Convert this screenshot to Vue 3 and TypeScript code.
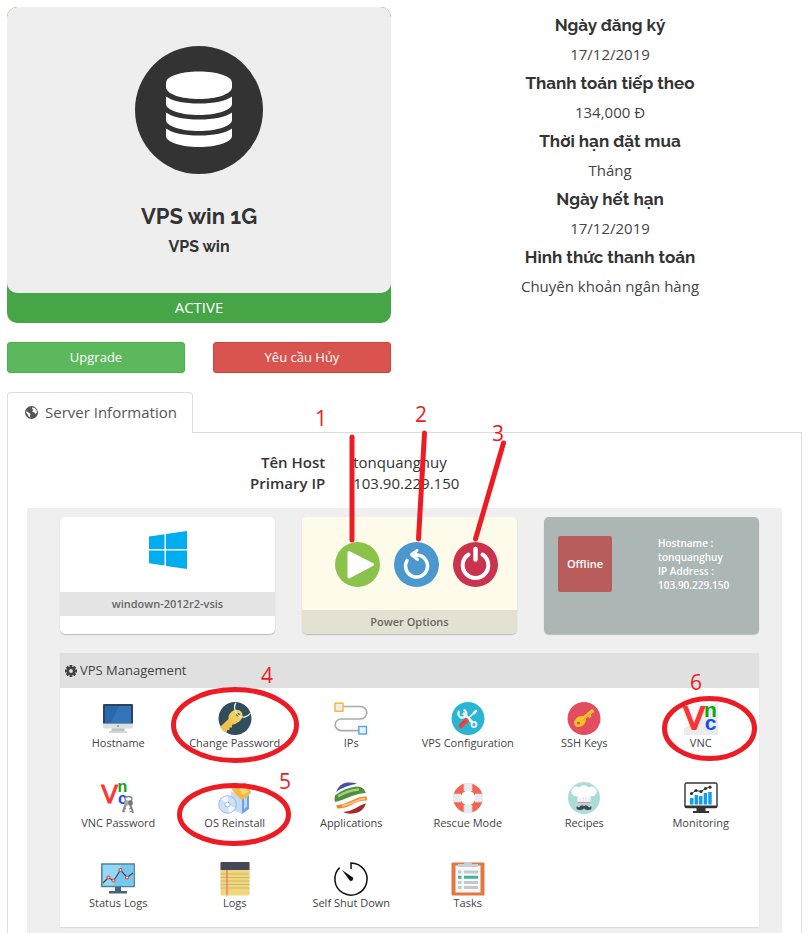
<script setup lang="ts">
interface Detail {
  label: string
  value: string
}
interface Tool {
  id: string
  label: string
}
interface Callout {
  label: string
  x: number
  y: number
}

const details: Detail[] = [
  { label: 'Ngày đăng ký', value: '17/12/2019' },
  { label: 'Thanh toán tiếp theo', value: '134,000 Đ' },
  { label: 'Thời hạn đặt mua', value: 'Tháng' },
  { label: 'Ngày hết hạn', value: '17/12/2019' },
  { label: 'Hình thức thanh toán', value: 'Chuyên khoản ngân hàng' },
]

const tools: Tool[] = [
  { id: 'hostname', label: 'Hostname' },
  { id: 'password', label: 'Change Password' },
  { id: 'ips', label: 'IPs' },
  { id: 'config', label: 'VPS Configuration' },
  { id: 'ssh', label: 'SSH Keys' },
  { id: 'vnc', label: 'VNC' },
  { id: 'vncpass', label: 'VNC Password' },
  { id: 'reinstall', label: 'OS Reinstall' },
  { id: 'apps', label: 'Applications' },
  { id: 'rescue', label: 'Rescue Mode' },
  { id: 'recipes', label: 'Recipes' },
  { id: 'monitoring', label: 'Monitoring' },
  { id: 'status', label: 'Status Logs' },
  { id: 'logs', label: 'Logs' },
  { id: 'shutdown', label: 'Self Shut Down' },
  { id: 'tasks', label: 'Tasks' },
]

const callouts: Callout[] = [
  { label: '1', x: 321, y: 426 },
  { label: '2', x: 421, y: 422 },
  { label: '3', x: 498, y: 441 },
  { label: '4', x: 267, y: 683 },
  { label: '5', x: 285, y: 789 },
  { label: '6', x: 696, y: 690 },
]
</script>

<template>
  <main class="page">
    <section class="overview">
      <div>
        <div class="product">
          <div class="product-body">
            <svg class="product-icon" viewBox="0 0 128 128" aria-hidden="true">
              <circle cx="64" cy="64" r="64" fill="#333" />
              <g fill="#fff">
                <path d="M31 37C31 30 46 25.500 64 25.500S97 30 97 37V41C97 48 82 53 64 53S31 48 31 41Z" />
                <path d="M31 50.500C37 55 49 57.500 64 57.500S91 55 97 50.500V58C97 64 82 69 64 69S31 64 31 58Z" />
                <path d="M31 66.500C37 71 49 73.500 64 73.500S91 71 97 66.500V74C97 80 82 85 64 85S31 80 31 74Z" />
                <path d="M31 82.500C37 87 49 89.500 64 89.500S91 87 97 82.500V90C97 96 82 101 64 101S31 96 31 90Z" />
              </g>
            </svg>
            <h1>VPS win 1G</h1>
            <h2>VPS win</h2>
          </div>
          <div class="product-status">ACTIVE</div>
        </div>
        <div class="actions">
          <button type="button" class="btn btn-upgrade">Upgrade</button>
          <button type="button" class="btn btn-cancel">Yêu cầu Hủy</button>
        </div>
      </div>
      <dl class="billing">
        <template v-for="d in details" :key="d.label">
          <dt>{{ d.label }}</dt>
          <dd>{{ d.value }}</dd>
        </template>
      </dl>
    </section>

    <nav class="tabs">
      <a class="tab" href="#server">
        <svg width="13" height="13" viewBox="0 0 13 13" aria-hidden="true">
          <circle cx="6.500" cy="6.500" r="6.500" fill="#555" />
          <path d="M7.500 1.200L9.500 2L11.500 4L12 6.500L10.500 8L9.500 6.500L7.500 6L7.500 4.800L8.800 3.800L7 3Z" fill="#fff" />
          <path d="M1.500 5L3.500 6.500L5.500 8L5 9.800L5.300 11.500L3.500 10.500L2.700 8.500L1.200 6.800Z" fill="#fff" />
        </svg>
        Server Information
      </a>
    </nav>

    <section id="server" class="tab-panel">
      <dl class="host">
        <dt>Tên Host</dt>
        <dd>tonquanghuy</dd>
        <dt>Primary IP</dt>
        <dd>103.90.229.150</dd>
      </dl>

      <div class="console">
        <div class="cards">
          <article class="card">
            <div class="os-logo">
              <svg width="38" height="38" viewBox="0 0 38 38" aria-hidden="true">
                <path d="M0 5.500L15.500 3.300V18H0ZM17 3.100L38 0V18H17ZM0 19.500H15.500V34.500L0 32.300ZM17 19.500H38V38L17 34.900Z" fill="#00adef" />
              </svg>
            </div>
            <p class="card-label">windown-2012r2-vsis</p>
          </article>

          <article class="card card-power">
            <div class="power-buttons">
              <button type="button" class="power" aria-label="Start">
                <svg viewBox="0 0 45 45" aria-hidden="true">
                  <circle cx="22.500" cy="22.500" r="22.500" fill="#8bc34a" />
                  <path d="M14 10.500L37.500 22.500L14 35Z" fill="#fff" stroke="#fff" stroke-width="3" stroke-linejoin="round" />
                </svg>
              </button>
              <button type="button" class="power" aria-label="Restart">
                <svg viewBox="0 0 45 45" aria-hidden="true">
                  <circle cx="22.500" cy="22.500" r="22.500" fill="#4a98ce" />
                  <path d="M13 18.500A11 11 0 1 0 23 13" fill="none" stroke="#fff" stroke-width="3.500" stroke-linecap="round" />
                  <path d="M23 8.500L17.500 12.500L23.500 17.500" fill="#fff" stroke="#fff" stroke-width="3" stroke-linejoin="round" stroke-linecap="round" />
                </svg>
              </button>
              <button type="button" class="power" aria-label="Shut down">
                <svg viewBox="0 0 45 45" aria-hidden="true">
                  <circle cx="22.500" cy="22.500" r="22.500" fill="#cb324d" />
                  <path d="M15.500 12.500A12.800 12.800 0 1 0 29.500 12.500" fill="none" stroke="#fff" stroke-width="4" stroke-linecap="round" />
                  <path d="M22.500 7V17.500" stroke="#fff" stroke-width="4.500" stroke-linecap="round" />
                </svg>
              </button>
            </div>
            <p class="card-label">Power Options</p>
          </article>

          <article class="card card-state">
            <strong class="state">Offline</strong>
            <p class="state-info">
              Hostname :<br />tonquanghuy<br />IP Address :<br />103.90.229.150
            </p>
          </article>
        </div>

        <section class="manage">
          <h3>
            <svg width="12" height="12" viewBox="0 0 12 12" aria-hidden="true">
              <g stroke="#444" stroke-width="2.800">
                <path d="M6 0V12M0 6H12M1.700 1.700L10.300 10.300M10.300 1.700L1.700 10.300" />
              </g>
              <circle cx="6" cy="6" r="4.300" fill="#444" />
              <circle cx="6" cy="6" r="1.900" fill="#e0e0e0" />
            </svg>
            VPS Management
          </h3>
          <ul class="tools">
            <li v-for="t in tools" :key="t.id">
              <a href="#server" class="tool">
                <svg class="tool-icon" viewBox="0 0 34 34" aria-hidden="true">
                  <g v-if="t.id === 'hostname'">
                    <path d="M11 26H23L24 30H10Z" fill="#bfc3c7" />
                    <path d="M8 29H26V31H8Z" fill="#d3d6d8" />
                    <rect x="2" y="2" width="30" height="21" rx="1" fill="#254561" />
                    <rect x="4" y="4" width="26" height="17" fill="#2a67ad" />
                    <path d="M18 4H30V21H10Z" fill="#3475ba" />
                    <path d="M2 21.500H32V25Q32 26.500 30.500 26.500H3.500Q2 26.500 2 25Z" fill="#dde0e2" />
                    <circle cx="17" cy="24" r=".8" fill="#555" />
                  </g>
                  <g v-else-if="t.id === 'password'">
                    <circle cx="17" cy="16.500" r="16.500" fill="#324d5c" />
                    <path d="M12 15.500L2 25L6 29.500L8.500 30.500L9.500 28L11.500 28V25.500L14 25.500V23L18.500 21.500Z" fill="#efc14f" />
                    <ellipse cx="17.500" cy="14.500" rx="7.500" ry="6.300" fill="#f4cd5b" transform="rotate(-40 17.500 14.500)" />
                    <circle cx="20" cy="12.800" r="1.800" fill="#324d5c" />
                    <path d="M20 13C15.500 9 16 3 18 .8M20 13C24 17 30 15 32.500 11" fill="none" stroke="#e8eef0" stroke-width="1.300" />
                  </g>
                  <g v-else-if="t.id === 'ips'" fill="none">
                    <path d="M9 4.500H26.500A6.200 6.200 0 0 1 26.500 17H7A5.800 5.800 0 0 0 7 28.600H25" stroke="#aaa" stroke-width="1.600" />
                    <rect x="1" y="1.200" width="8" height="8" fill="#eee" stroke="#f6b728" stroke-width="1.400" />
                    <rect x="24.800" y="24.500" width="7.700" height="7.500" fill="#eee" stroke="#3da5df" stroke-width="1.300" />
                  </g>
                  <g v-else-if="t.id === 'config'">
                    <circle cx="17" cy="16.500" r="16.500" fill="#29b6d3" />
                    <path d="M12 11L22 21" stroke="#f1f3f4" stroke-width="3" />
                    <path d="M8.300 9A4 4 0 1 0 12.500 7.800" fill="none" stroke="#f1f3f4" stroke-width="2.300" />
                    <circle cx="23" cy="22.500" r="2.500" fill="none" stroke="#f1f3f4" stroke-width="1.800" />
                    <path d="M15 18.500L23 11" stroke="#fff" stroke-width="1.500" />
                    <path d="M21.500 10.500L25 7.500L26.500 9L23.500 12.500Z" fill="#fff" />
                    <path d="M15.500 18.500L9.700 24" stroke="#e84849" stroke-width="4.500" stroke-linecap="round" />
                    <path d="M13.500 19L9 23.500" stroke="#c92d38" stroke-width="1" />
                  </g>
                  <g v-else-if="t.id === 'ssh'">
                    <circle cx="17" cy="16.500" r="16.500" fill="#e24e60" />
                    <path d="M14 18.500L25.500 8.500" stroke="#f9c425" stroke-width="3" />
                    <path d="M20 13L22.500 16.500L24.500 14.500L23.500 12.500L25.500 11L27.300 10L26 7L23 8.500" fill="#f9c425" />
                    <ellipse cx="13" cy="19.500" rx="6.500" ry="4.900" fill="#f9c425" transform="rotate(-40 13 19.500)" />
                    <circle cx="11.500" cy="21" r="1.600" fill="#e24e60" />
                    <path d="M15.500 18.500L24.500 10.500" stroke="#df9e17" stroke-width=".8" />
                  </g>
                  <g v-else-if="t.id === 'vnc'">
                    <rect width="34" height="33" fill="#ececec" />
                    <path d="M0 0H34L0 27Z" fill="#fafafa" />
                    <text class="vnc-big" x="10" y="27">V</text>
                    <text class="vnc-mid vnc-n" x="26.500" y="15">n</text>
                    <text class="vnc-mid vnc-c" x="26.500" y="28">c</text>
                  </g>
                  <g v-else-if="t.id === 'vncpass'">
                    <text class="vnc-medium" x="8.500" y="20.500">V</text>
                    <text class="vnc-small vnc-n" x="21.500" y="10">n</text>
                    <text class="vnc-small vnc-c" x="21.500" y="21.500">c</text>
                    <g fill="none" stroke="#858585">
                      <ellipse cx="27.500" cy="17" rx="3.500" ry="2.500" stroke-width="1.300" />
                      <path d="M25 21L22 30M29 21L32 31" stroke-width="2" />
                      <path d="M22 26L25 27M21.500 29L24 30M30 26L28 27M31 29L28.500 30" stroke-width="1.300" />
                    </g>
                    <ellipse cx="25.500" cy="21" rx="2.300" ry="2.800" fill="#aaa" />
                    <ellipse cx="29.500" cy="21" rx="2.300" ry="2.800" fill="#777" />
                  </g>
                  <g v-else-if="t.id === 'reinstall'">
                    <path d="M13 9L24 14V32L13 27Z" fill="#c3daf8" />
                    <path d="M24 14L31 9V27L24 32Z" fill="#719fe0" />
                    <path d="M26 15L29 13V25L26 27Z" fill="#b9d7fa" />
                    <path d="M14 7L18 0L23 4L27 0L33 10L28 17L22 12Z" fill="#a9c7f2" />
                    <path d="M13 6L20 4L31 6L33 11L24 18L18 13Z" fill="#f6b940" />
                    <path d="M21 4L29 6L30 10L24 13Z" fill="#ffd774" />
                    <circle cx="9.500" cy="22.500" r="8.800" fill="#cfe0f8" stroke="#8fa9d4" stroke-width=".8" />
                    <path d="M9.500 22.500L3 17A8 8 0 0 1 10 14.500ZM9.500 22.500L17 26A8 8 0 0 1 11 30.500Z" fill="#f2f7ff" />
                    <circle cx="9.500" cy="22.500" r="2.500" fill="#fff" stroke="#8aa9d7" stroke-width=".8" />
                  </g>
                  <g v-else-if="t.id === 'apps'" fill="none">
                    <path d="M2 10Q5 2 13 .6Q19 0 23 1.800Q11 3.500 2 10Z" fill="#3f559c" />
                    <path d="M.8 20Q0 16 1 13.500Q10 6 22 4.500Q28 4.500 30 7.500L32 11Q26 11 18 14Q9 18 .8 20Z" fill="#4f8f3a" />
                    <path d="M4 14.500Q13 8.500 25 7.500" stroke="#a4cd85" stroke-width="2.500" />
                    <path d="M3.500 26.500L2 23.500Q10 22.500 18 18.500Q26 14 32.800 14.500V18.500Q26 18 18 22.500Q11 26.500 3.500 26.500Z" fill="#f08530" />
                    <path d="M8 24Q15 22.500 20 20Q26 17 31 16.500" stroke="#ffc477" stroke-width="1.800" />
                    <path d="M9 30Q16 29.500 22 26Q28 22 32 21.500Q29.500 29 22 31Q14 33 9 30Z" fill="#a32c2a" />
                  </g>
                  <g v-else-if="t.id === 'rescue'" fill="none">
                    <circle cx="17" cy="16" r="11" stroke="#f46452" stroke-width="7.500" />
                    <path d="M13 1H21V9H13ZM13 23H21V31H13ZM2 12H10V20H2ZM24 12H32V20H24Z" fill="#e8ecef" />
                    <path d="M13 1V9M21 1V9M13 23V31M21 23V31M2 12H10M24 12H32M2 20H10M24 20H32" stroke="#cfd5d9" stroke-width=".8" />
                  </g>
                  <g v-else-if="t.id === 'recipes'">
                    <circle cx="17" cy="16" r="16" fill="#abdcd8" />
                    <path d="M10.500 21V14A4.800 4.800 0 1 1 12 5.500Q17 1 22 5.500A4.800 4.800 0 1 1 23.500 14V21Z" fill="#fff" />
                    <path d="M13 16V20M16 15V20M19 15V20M22 16V20" stroke="#ccdcdd" stroke-width="1" />
                    <path d="M10.500 20.500H23.500" stroke="#f28c91" stroke-width="1.200" />
                    <path d="M17 24Q20 22 21.500 25Q23 26 24 24Q26 28 21 28Q18.500 28 17 26.500Q15.500 28 13 28Q8 28 10 24Q11 26 12.500 25Q14 22 17 24Z" fill="#3e4a50" />
                  </g>
                  <g v-else-if="t.id === 'monitoring'">
                    <rect x="1" y="1" width="32" height="24.500" rx="1.500" fill="#fff" stroke="#333" stroke-width="1.400" />
                    <path d="M1 24.500H33" stroke="#333" stroke-width="2" />
                    <path d="M12.500 26H21.500V29H25V31H9V29H12.500Z" fill="#333" />
                    <path d="M6 16H9.500V22.500H6ZM10.600 13H14V22.500H10.600ZM15 14H18.500V22.500H15ZM19.700 11H23V22.500H19.700ZM24.200 10H27.700V22.500H24.200Z" fill="#129df1" />
                    <path d="M7.500 11.500L12 8.500L17 9.500L21.500 6.500L26 5" stroke="#333" stroke-width="1" fill="none" />
                    <g fill="#333">
                      <circle cx="7.500" cy="11.500" r="1.600" />
                      <circle cx="12" cy="8.500" r="1.600" />
                      <circle cx="17" cy="9.500" r="1.600" />
                      <circle cx="21.500" cy="6.500" r="1.600" />
                      <circle cx="26" cy="5.200" r="1.600" />
                    </g>
                  </g>
                  <g v-else-if="t.id === 'status'">
                    <path d="M14 24H20V29H26V31.500H8V29H14Z" fill="#46647a" />
                    <rect x=".8" y="2" width="32.400" height="22.500" fill="#92d9f7" stroke="#557d98" stroke-width="1.500" />
                    <path d="M20 3H32.500V24H12Z" fill="#75c9f0" />
                    <path d="M2 21L7.500 15.500L12.500 19L19.500 8L26 15.500L32 11" fill="none" stroke="#3a4954" stroke-width="1.200" />
                    <g fill="#fff" stroke="#ee3c3c" stroke-width="1.200">
                      <circle cx="7.500" cy="15.500" r="1.500" />
                      <circle cx="12.500" cy="18.500" r="1.500" />
                      <circle cx="19.500" cy="8" r="1.500" />
                      <circle cx="26" cy="15.500" r="1.500" />
                    </g>
                  </g>
                  <g v-else-if="t.id === 'logs'">
                    <rect x="2.500" y="0" width="29" height="33.500" rx="1.500" fill="#f0d77d" />
                    <path d="M2.500 8V1Q2.500 0 3.500 0H30.500Q31.500 0 31.500 1V8Z" fill="#444854" />
                    <path d="M2.500 12H31.500M2.500 15.500H31.500M2.500 19H31.500M2.500 22.500H31.500M2.500 26H31.500" stroke="#cdb96c" stroke-width="1" />
                    <path d="M9 8V33.500" stroke="#f26b62" stroke-width="1.200" />
                  </g>
                  <g v-else-if="t.id === 'shutdown'">
                    <path d="M17 7V.9A16.100 16.100 0 1 1 5.600 5.600" fill="none" stroke="#111" stroke-width="1.500" />
                    <path d="M8 8L18.500 15.200A2 2 0 0 1 15.500 18.300Z" fill="#111" />
                  </g>
                  <g v-else>
                    <rect x=".5" y=".5" width="33" height="33" rx="1" fill="#e2773f" />
                    <rect x="4.500" y="3.500" width="25" height="27" fill="#f7f8f8" />
                    <path d="M7 2H13Q13 0 15 0H19Q21 0 21 2H27V5H7Z" fill="#c9cfd2" />
                    <path d="M7 10H10.500M7 20.500H10.500M7 25.500H10.500M13 10H27M13 20.500H27M13 25.500H27" stroke="#c3c9cb" stroke-width="3" />
                    <path d="M7 15.200H10.500M13 15.200H27" stroke="#3fb39d" stroke-width="3" />
                  </g>
                </svg>
                <span>{{ t.label }}</span>
              </a>
            </li>
          </ul>
        </section>
      </div>
    </section>

    <!-- Numbered callouts drawn over the page -->
    <svg class="callouts" width="807" height="933" viewBox="0 0 807 933" aria-hidden="true">
      <g fill="none" stroke="#ed1c24" stroke-width="5" stroke-linecap="round">
        <path d="M352 437V540M424.500 433L418.500 539M503.500 443L475.500 539" />
        <ellipse cx="235" cy="725" rx="61.500" ry="35.500" />
        <ellipse cx="234" cy="814.500" rx="54.500" ry="29" />
        <ellipse cx="709.500" cy="728.500" rx="45" ry="30" />
      </g>
      <text v-for="c in callouts" :key="c.label" :x="c.x" :y="c.y">{{ c.label }}</text>
    </svg>
  </main>
</template>

<style>
body {
  background: #fff;
}
</style>

<style scoped>
* {
  box-sizing: border-box;
}
h1,
h2,
h3,
p,
dl,
dd,
ul {
  margin: 0;
  padding: 0;
}
.page {
  position: relative;
  padding: 7px 5px 0 7px;
  color: #333;
  font-family: 'Open Sans', sans-serif;
  font-size: 15px;
  line-height: 21px;
}
.overview {
  display: grid;
  grid-template-columns: 1fr 1fr;
  gap: 27px;
}
.product {
  background: #46a546;
  border-radius: 10px;
  overflow: hidden;
  text-align: center;
}
.product-body {
  display: flex;
  flex-direction: column;
  align-items: center;
  padding: 39px 10px 35px;
  background: #eee;
  border-radius: 10px;
}
.product-icon {
  width: 128px;
  height: 128px;
  margin-bottom: 28px;
}
h1,
h2,
.billing dt {
  font-family: Raleway, sans-serif;
  font-weight: 700;
}
h1 {
  font-size: 22px;
  line-height: 28px;
}
h2 {
  padding-top: 6px;
  font-size: 16px;
  line-height: 22px;
}
.product-status {
  padding-bottom: 2px;
  color: #fff;
  line-height: 28px;
}
.actions {
  display: grid;
  grid-template-columns: 1fr 1fr;
  gap: 28px;
  padding-top: 19px;
}
.btn {
  height: 31px;
  padding: 0;
  border: 1px solid;
  border-radius: 3px;
  color: #fff;
  font: 500 13px/29px 'Open Sans', sans-serif;
}
.btn-upgrade {
  background: #5cb85c;
  border-color: #4cae4c;
}
.btn-cancel {
  background: #d9534f;
  border-color: #d43f3a;
}
.billing {
  padding-top: 3px;
  text-align: center;
}
.billing dt {
  font-size: 17px;
  line-height: 30px;
}
.billing dd {
  color: #444;
  line-height: 28px;
}
.tabs {
  display: flex;
  padding-top: 19px;
}
.tab {
  display: flex;
  align-items: center;
  gap: 7px;
  height: 41px;
  padding: 0 15px 2px 17px;
  margin-bottom: -1px;
  border: 1px solid #ddd;
  border-bottom: 0;
  border-radius: 4px 4px 0 0;
  background: #fff;
  color: #555;
  text-decoration: none;
}
.tab-panel {
  border: 1px solid #ddd;
  border-width: 1px 1px 0;
  padding-top: 19px;
}
.host {
  display: grid;
  grid-template-columns: 40% 1fr;
  column-gap: 28px;
}
.host dt {
  font-weight: 600;
  text-align: right;
}
.console {
  margin: 14px 19px 0;
  padding: 9px 23px 6px 33px;
  background: #efefef;
}
.cards {
  display: grid;
  grid-template-columns: repeat(3, 1fr);
  gap: 27px;
}
.card {
  display: flex;
  flex-direction: column;
  height: 117px;
  overflow: hidden;
  background: #fff;
  border-radius: 5px;
  box-shadow: 0 1px 1px #bbb;
}
.os-logo {
  display: flex;
  justify-content: center;
  height: 75px;
  padding-top: 14px;
}
.card-label {
  background: #e5e5e5;
  color: #666;
  font-size: 11px;
  font-weight: 600;
  line-height: 24px;
  text-align: center;
}
.card-power {
  background: #fffbea;
}
.card-power .card-label {
  margin-top: auto;
  background: #e4e1d2;
}
.power-buttons {
  display: flex;
  justify-content: center;
  gap: 14px;
  padding: 25px 0 0 13px;
}
.power {
  width: 45px;
  height: 45px;
  padding: 0;
  border: 0;
  background: none;
}
.power svg {
  display: block;
}
.card-state {
  flex-direction: row;
  align-items: flex-start;
  gap: 46px;
  padding: 19px 14px;
  background: #abb6b5;
  color: #fff;
  font-weight: 600;
}
.state {
  width: 54px;
  border-radius: 2px;
  background: #b85c5c;
  font-size: 11px;
  font-weight: 600;
  line-height: 56px;
  text-align: center;
}
.state-info {
  font-size: 10px;
  line-height: 14px;
}
.manage {
  margin-top: 19px;
  background: #fff;
  box-shadow: 0 1px 1px #ddd;
}
.manage h3 {
  display: flex;
  align-items: center;
  gap: 3px;
  padding-left: 5px;
  background: #e0e0e0;
  color: #444;
  font-size: 13px;
  font-weight: 400;
  line-height: 35px;
}
.tools {
  display: grid;
  grid-template-columns: repeat(6, 1fr);
  row-gap: 32px;
  padding: 14px 0 17px;
  list-style: none;
}
.tool {
  display: flex;
  flex-direction: column;
  align-items: center;
  color: #444;
  font-size: 11px;
  line-height: 14px;
  text-decoration: none;
  white-space: nowrap;
}
.tool-icon {
  width: 34px;
  height: 34px;
  overflow: visible;
}
.vnc-big,
.vnc-medium,
.vnc-mid,
.vnc-small {
  font-family: 'Liberation Sans', sans-serif;
  font-weight: 700;
  line-height: 1;
  text-anchor: middle;
}
.vnc-big,
.vnc-medium {
  fill: #fb3434;
  stroke: #fb3434;
  font-weight: 400;
}
.vnc-big {
  font-size: 31px;
  stroke-width: 2;
}
.vnc-medium {
  font-size: 25px;
  stroke-width: 1;
}
.vnc-mid {
  font-size: 21px;
}
.vnc-small {
  font-size: 16px;
}
.vnc-n {
  fill: #10a510;
}
.vnc-c {
  fill: #164bff;
}
.callouts {
  position: absolute;
  top: 0;
  left: 0;
  pointer-events: none;
}
.callouts text {
  fill: #ed1c24;
  font-size: 21px;
  text-anchor: middle;
}
</style>
